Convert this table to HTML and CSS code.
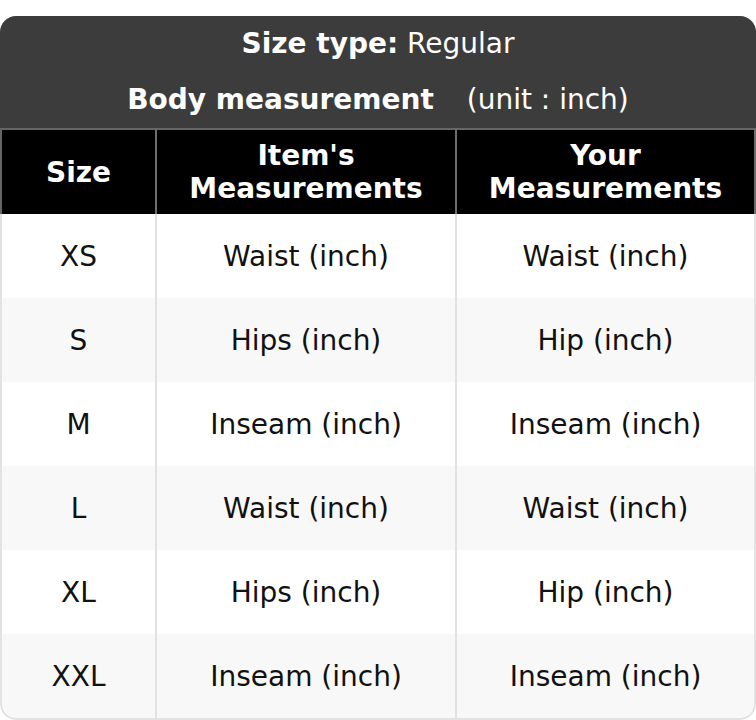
FILE: index.html
```html
<!DOCTYPE html>
<html lang="en">
<head>
<meta charset="utf-8">
<title>Size chart</title>
<link rel="stylesheet" href="styles.css">
</head>
<body>
<div class="card">
  <div class="caption">
    <div class="caption-line"><b>Size type:</b> Regular</div>
    <div class="caption-line"><b>Body measurement</b><span class="unit">(unit : inch)</span></div>
  </div>
  <table class="chart">
    <colgroup>
      <col class="c1"><col class="c2"><col class="c3">
    </colgroup>
    <thead>
      <tr><th>Size</th><th>Item's<br>Measurements</th><th>Your<br>Measurements</th></tr>
    </thead>
    <tbody>
      <tr><td>XS</td><td>Waist (inch)</td><td>Waist (inch)</td></tr>
      <tr><td>S</td><td>Hips (inch)</td><td>Hip (inch)</td></tr>
      <tr><td>M</td><td>Inseam (inch)</td><td>Inseam (inch)</td></tr>
      <tr><td>L</td><td>Waist (inch)</td><td>Waist (inch)</td></tr>
      <tr><td>XL</td><td>Hips (inch)</td><td>Hip (inch)</td></tr>
      <tr><td>XXL</td><td>Inseam (inch)</td><td>Inseam (inch)</td></tr>
    </tbody>
  </table>
</div>
</body>
</html>
```
FILE: styles.css
```css
html, body {
  margin: 0;
  padding: 0;
  background: #ffffff;
}
body {
  font-family: "DejaVu Sans", sans-serif;
  color: #111111;
}
.card {
  margin-top: 16px;
  width: 756px;
  border-radius: 16px;
  overflow: hidden;
}
.caption {
  background: #3c3c3c;
  color: #ffffff;
  font-size: 28px;
  text-align: center;
  height: 112px;
  display: flex;
  flex-direction: column;
}
.caption-line {
  height: 56px;
  line-height: 56px;
}
.caption-line b {
  font-weight: bold;
}
.unit {
  margin-left: 33px;
}
.chart {
  width: 756px;
  border-collapse: separate;
  border-spacing: 0;
  table-layout: fixed;
  font-size: 28px;
}
.c1 { width: 157px; }
.c2 { width: 300px; }
.c3 { width: 299px; }
.chart th {
  background: #000000;
  color: #ffffff;
  font-weight: bold;
  height: 84px;
  padding: 0;
  line-height: 33px;
  border-top: 2px solid #666666;
  border-right: 2px solid #6e6e6e;
  vertical-align: middle;
}
.chart th:first-child {
  border-left: 2px solid #666666;
}
.chart td {
  height: 84px;
  padding: 0;
  text-align: center;
  vertical-align: middle;
  border-right: 2px solid #e2e2e2;
}
.chart td:first-child {
  border-left: 2px solid #e2e2e2;
}
.chart tbody tr:nth-child(even) td {
  background: #f8f8f8;
}
.chart tbody tr:last-child td {
  border-bottom: 2px solid #e2e2e2;
}
.chart tbody tr:last-child td:first-child {
  border-bottom-left-radius: 16px;
}
.chart tbody tr:last-child td:last-child {
  border-bottom-right-radius: 16px;
}
```
